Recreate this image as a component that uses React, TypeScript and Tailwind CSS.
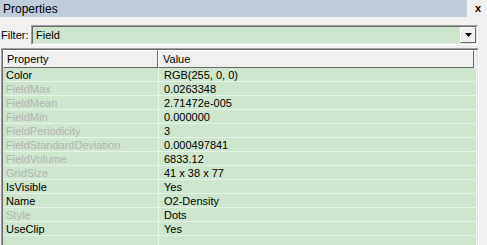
const rows: [string, string, boolean][] = [
  ['Color', 'RGB(255, 0, 0)', true],
  ['FieldMax', '0.0263348', false],
  ['FieldMean', '2.71472e-005', false],
  ['FieldMin', '0.000000', false],
  ['FieldPeriodicity', '3', false],
  ['FieldStandardDeviation', '0.000497841', false],
  ['FieldVolume', '6833.12', false],
  ['GridSize', '41 x 38 x 77', false],
  ['IsVisible', 'Yes', true],
  ['Name', 'O2-Density', true],
  ['Style', 'Dots', false],
  ['UseClip', 'Yes', true],
  ['', '', true],
];

export default function App() {
  return (
    <div className="w-[487px] h-[245px] overflow-hidden bg-[#f0f0f0] text-[11px] text-black font-['Liberation_Sans',Arial,sans-serif] leading-none">
      {/* title bar */}
      <div className="flex h-[17px] items-stretch">
        <div className="w-[467px] bg-[#bfcddb] flex items-center pl-[3px] text-[12px]">Properties</div>
        <div className="flex-1 flex items-center justify-center font-bold text-[11px] pl-[2px]">x</div>
      </div>

      {/* filter */}
      <div className="flex items-center h-[20px] mt-[8px]">
        <span className="w-[31px] pl-[1px] pt-[1px]">Filter:</span>
        <div className="w-[447px] h-[20px] border border-t-[#a0a0a0] border-l-[#a0a0a0] border-b-white border-r-white">
          <div className="h-full border border-t-[#696969] border-l-[#696969] border-b-[#e3e3e3] border-r-[#e3e3e3] bg-[#cde6cd] flex items-center">
            <span className="flex-1 pl-[3px] pt-[1px]">Field</span>
            <div className="w-[16px] h-[16px] bg-[#f0f0f0] border border-t-white border-l-white border-b-[#696969] border-r-[#696969] flex items-center justify-center">
              <svg width="7" height="4" viewBox="0 0 7 4">
                <path d="M0 0h7L3.5 4z" fill="#000" />
              </svg>
            </div>
          </div>
        </div>
      </div>

      {/* grid */}
      <div className="flex mt-[3px]">
        <div className="w-[478px] h-[200px] ml-[1px] border border-t-[#a0a0a0] border-l-[#a0a0a0] border-r-white border-b-0">
          <div className="h-full border border-t-[#696969] border-l-[#696969] border-r-[#e3e3e3] border-b-0 bg-[#f0f0f0] overflow-hidden">
            <div className="flex h-[18px]">
              <div className="w-[155px] border border-t-white border-l-white border-b-[#696969] border-r-[#696969] flex items-center pl-[3px] pt-[1px]">Property</div>
              <div className="w-[316px] border border-t-white border-l-white border-b-[#696969] border-r-[#696969] flex items-center pl-[4px] pt-[1px]">Value</div>
            </div>
            <div className="w-[473px]">
              {rows.map(([k, v, en], i) => (
                <div key={i} className="flex h-[14px] bg-[#cde6cd] border-b border-[#e8f2e8]">
                  <div className={`w-[156px] pl-[3px] pt-[2px] border-r border-[#e8f2e8] flex items-center ${en ? 'text-black' : 'text-[#b4b4b4]'}`}>{k}</div>
                  <div className="flex-1 pl-[5px] pt-[2px] flex items-center">{v}</div>
                </div>
              ))}
            </div>
          </div>
        </div>
      </div>
    </div>
  );
}
